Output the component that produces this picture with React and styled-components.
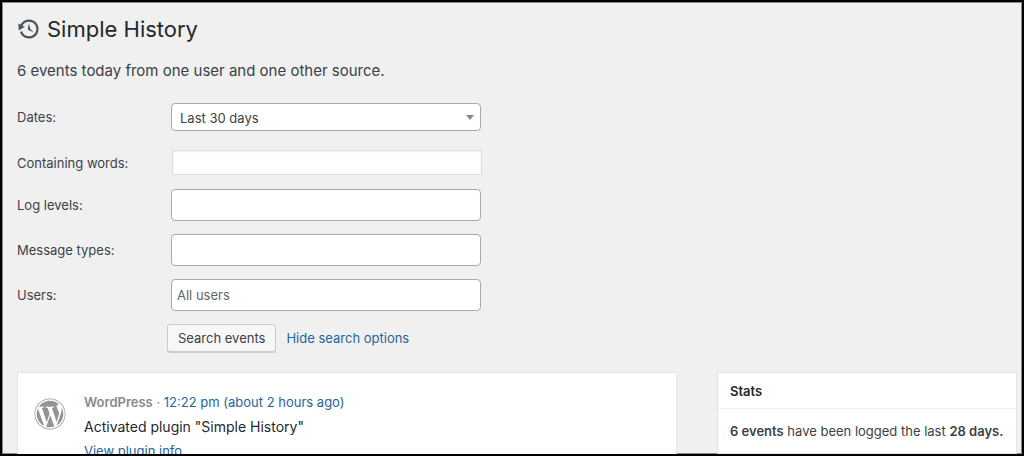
import styled, { createGlobalStyle } from 'styled-components';
import { FaWordpress } from 'react-icons/fa';

const GlobalStyle = createGlobalStyle`
  * {
    box-sizing: border-box;
  }
  body {
    margin: 0;
    background: #f0f0f0;
    color: #3c4146;
    font-family: Inter, 'Liberation Sans', sans-serif;
    font-size: 13px;
    line-height: 18px;
  }
  button,
  input,
  select {
    font: inherit;
    color: inherit;
  }
`;

const StyledPage = styled.main`
  height: 100vh;
  overflow: hidden;
  padding: 12px 5px 0 15px;
  border: 2px solid #000;
  box-shadow: inset 0 0 0 1px #888;
`;

const StyledTitle = styled.h1`
  display: flex;
  align-items: center;
  gap: 6px;
  margin: 0;
  color: #23282d;
  font-size: 22px;
  font-weight: 400;
  line-height: 30px;
  svg {
    width: 24px;
    height: 24px;
    fill: #4a5560;
  }
`;

const StyledSummary = styled.p`
  margin: 15px 0 20px;
  font-size: 15px;
  line-height: 24px;
`;

const StyledRow = styled.div`
  display: flex;
  align-items: center;
  margin-bottom: ${({ $gap }) => $gap || 13}px;
  label {
    flex: 0 0 154px;
  }
`;

const StyledSelect = styled.div`
  position: relative;
  width: 310px;
  select {
    display: block;
    width: 100%;
    height: 28px;
    padding: 2px 28px 0 8px;
    border: 1px solid #aaa;
    border-radius: 4px;
    background: #fff;
    appearance: none;
  }
  &::after {
    content: '';
    position: absolute;
    top: 12px;
    right: 7px;
    border: 4px solid transparent;
    border-top: 5px solid #888;
    border-bottom: 0;
    pointer-events: none;
  }
`;

const StyledWords = styled.input`
  width: 310px;
  height: 25px;
  margin-left: 1px;
  padding: 3px 5px;
  border: 1px solid #ddd;
  background: #fff;
  box-shadow: inset 0 1px 2px rgba(0, 0, 0, 0.07);
`;

const StyledTokens = styled.input`
  width: 310px;
  height: 32px;
  padding: 0 5px;
  border: 1px solid #aaa;
  border-radius: 4px;
  background: #fff;
  &::placeholder {
    color: #5f666d;
    opacity: 1;
  }
`;

const StyledActions = styled.div`
  display: flex;
  align-items: center;
  gap: 10px;
  margin: 0 0 20px 150px;
`;

const StyledButton = styled.button`
  height: 28px;
  padding: 0 10px;
  border: 1px solid #ccc;
  border-radius: 3px;
  background: #f7f7f7;
  box-shadow: 0 1px 0 #ccc;
`;

const StyledLink = styled.a`
  color: #1f659b;
  text-decoration: none;
`;

const StyledColumns = styled.div`
  display: grid;
  grid-template-columns: minmax(0, 1fr) 300px;
  align-items: start;
  gap: 40px;
`;

const StyledPanel = styled.section`
  border: 1px solid #e5e5e5;
  background: #fff;
`;

const StyledEvent = styled.article`
  display: flex;
  gap: 18px;
  padding: 19px 16px;
  & > svg {
    flex: none;
    width: 32px;
    height: 32px;
    margin-top: 6px;
    color: #949494;
  }
  p {
    margin: 0;
  }
`;

const StyledMeta = styled.p`
  color: #8a8a8a;
  line-height: 20px;
  strong {
    font-weight: 600;
  }
`;

const StyledMessage = styled.p`
  color: #23282d;
  font-size: 14px;
  line-height: 30px;
`;

const StyledStats = styled(StyledPanel)`
  h2 {
    margin: 0;
    padding: 9px 12px 8px;
    border-bottom: 1px solid #eee;
    color: #23282d;
    font-size: 13px;
    font-weight: 600;
  }
  p {
    margin: 0;
    padding: 13px 12px;
    white-space: nowrap;
  }
  strong {
    font-weight: 600;
  }
`;

function BackupIcon() {
  return (
    <svg viewBox="0 0 20 20" aria-hidden="true">
      <path d="M13.65 2.88c3.93 2.01 5.48 6.84 3.47 10.77s-6.83 5.48-10.77 3.47c-1.87-.96-3.2-2.56-3.86-4.4l1.64-1.03c.45 1.57 1.52 2.95 3.08 3.76 3.01 1.54 6.69.35 8.23-2.66 1.55-3.01.36-6.69-2.65-8.24C9.78 3.01 6.1 4.2 4.56 7.21l1.88.97-4.95 3.08-.39-5.82 1.78.91C4.9 2.4 9.75.89 13.65 2.88zm-4.36 7.83C9.11 10.53 9 10.28 9 10c0-.07.03-.12.04-.19h-.01L10 5l.97 4.81L14 13l-4.5-2.12.02-.02c-.08-.04-.16-.09-.23-.15z" />
    </svg>
  );
}

function SearchForm() {
  return (
    <form onSubmit={(e) => e.preventDefault()}>
      <StyledRow $gap={19}>
        <label htmlFor="dates">Dates:</label>
        <StyledSelect>
          <select id="dates">
            <option>Last 30 days</option>
          </select>
        </StyledSelect>
      </StyledRow>
      <StyledRow $gap={14}>
        <label htmlFor="words">Containing words:</label>
        <StyledWords id="words" type="search" />
      </StyledRow>
      <StyledRow>
        <label htmlFor="levels">Log levels:</label>
        <StyledTokens id="levels" type="text" />
      </StyledRow>
      <StyledRow>
        <label htmlFor="types">Message types:</label>
        <StyledTokens id="types" type="text" />
      </StyledRow>
      <StyledRow>
        <label htmlFor="users">Users:</label>
        <StyledTokens id="users" type="text" placeholder="All users" />
      </StyledRow>
      <StyledActions>
        <StyledButton type="submit">Search events</StyledButton>
        <StyledLink href="#options">Hide search options</StyledLink>
      </StyledActions>
    </form>
  );
}

export default function App() {
  return (
    <>
      <GlobalStyle />
      <StyledPage>
        <StyledTitle>
          <BackupIcon />
          Simple History
        </StyledTitle>
        <StyledSummary>
          6 events today from one user and one other source.
        </StyledSummary>
        <SearchForm />
        <StyledColumns>
          <StyledPanel>
            <StyledEvent>
              <FaWordpress aria-hidden="true" />
              <div>
                <StyledMeta>
                  <strong>WordPress</strong> ·{' '}
                  <StyledLink href="#event">
                    12:22 pm (about 2 hours ago)
                  </StyledLink>
                </StyledMeta>
                <StyledMessage>Activated plugin "Simple History"</StyledMessage>
                <StyledLink href="#info">View plugin info</StyledLink>
              </div>
            </StyledEvent>
          </StyledPanel>
          <StyledStats>
            <h2>Stats</h2>
            <p>
              <strong>6 events</strong> have been logged the last{' '}
              <strong>28 days.</strong>
            </p>
          </StyledStats>
        </StyledColumns>
      </StyledPage>
    </>
  );
}
